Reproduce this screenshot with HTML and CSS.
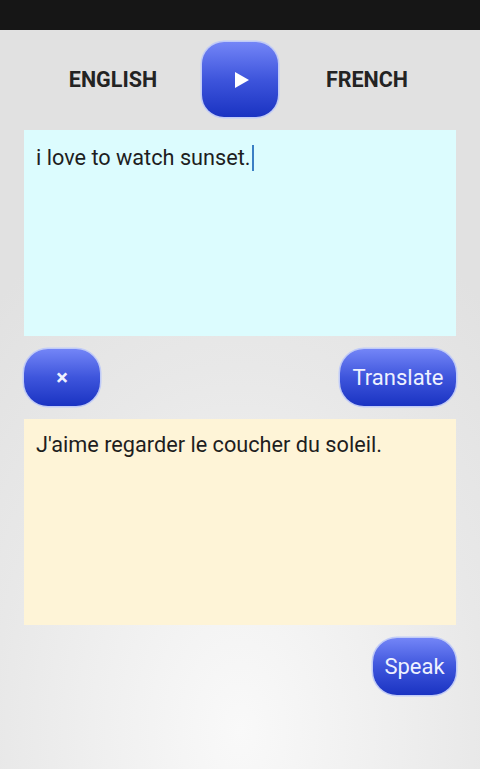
FILE: index.html
```html
<!DOCTYPE html>
<html>
<head>
<meta charset="utf-8">
<link rel="stylesheet" href="styles.css">
</head>
<body>
<div class="status"></div>
<main class="screen">
  <div class="lang-row">
    <div class="lang">ENGLISH</div>
    <button class="btn swap" aria-label="swap">
      <svg width="16" height="18" viewBox="0 0 16 18"><path d="M1 1 L15 9 L1 17 Z" fill="#fff"/></svg>
    </button>
    <div class="lang">FRENCH</div>
  </div>
  <div class="box input"><span>i love to watch sunset.</span><span class="caret"></span></div>
  <div class="actions">
    <button class="btn pill clear">×</button>
    <button class="btn pill translate">Translate</button>
  </div>
  <div class="box output">J'aime regarder le coucher du soleil.</div>
  <div class="speak-row">
    <button class="btn pill speak">Speak</button>
  </div>
</main>
</body>
</html>
```
FILE: styles.css
```css
html, body {
  margin: 0;
  padding: 0;
  height: 100%;
}
body {
  font-family: Roboto, "Liberation Sans", sans-serif;
  background: #e1e1e1;
  overflow: hidden;
}
.status {
  height: 30px;
  background: #161616;
}
.screen {
  height: 739px;
  background: radial-gradient(ellipse 380px 560px at 240px 700px, #f9f9f9 0%, #f0f0f0 35%, #e8e8e8 65%, #e1e1e1 100%);
  display: flex;
  flex-direction: column;
  padding: 0 24px;
  box-sizing: border-box;
}
.lang-row {
  display: flex;
  align-items: center;
  margin-top: 12px;
  height: 75px;
}
.lang {
  flex: 1;
  text-align: center;
  font-size: 21.5px;
  font-weight: bold;
  color: #232323;
}
.btn {
  border: none;
  padding: 0;
  margin: 0;
  background: linear-gradient(#7385f7, #3e55dc 50%, #1a33c2);
  box-shadow: 0 0 0 1.5px #c0cbf8;
  color: #eef1ff;
  font-family: Roboto, "Liberation Sans", sans-serif;
  display: flex;
  align-items: center;
  justify-content: center;
}
.swap {
  width: 76px;
  height: 75px;
  border-radius: 22px;
}
.swap svg {
  margin-left: 3px;
}
.box {
  height: 206px;
  margin-top: 13px;
  box-sizing: border-box;
  padding: 14px 12px;
  font-size: 21.7px;
  line-height: 28px;
  color: #1e1e1e;
}
.input {
  background: #dcfcfe;
}
.caret {
  display: inline-block;
  width: 2px;
  height: 26px;
  background: #3b7fc4;
  vertical-align: -6px;
  margin-left: 1px;
}
.output {
  background: #fef4d7;
  padding-top: 12px;
}
.actions {
  display: flex;
  justify-content: space-between;
  margin-top: 13px;
}
.pill {
  height: 57px;
  border-radius: 24px;
  font-size: 22px;
}
.clear {
  width: 76px;
  font-size: 22px;
  font-weight: bold;
}
.translate {
  width: 116px;
}
.speak-row {
  display: flex;
  justify-content: flex-end;
  margin-top: 13px;
}
.speak {
  width: 83px;
}
```
